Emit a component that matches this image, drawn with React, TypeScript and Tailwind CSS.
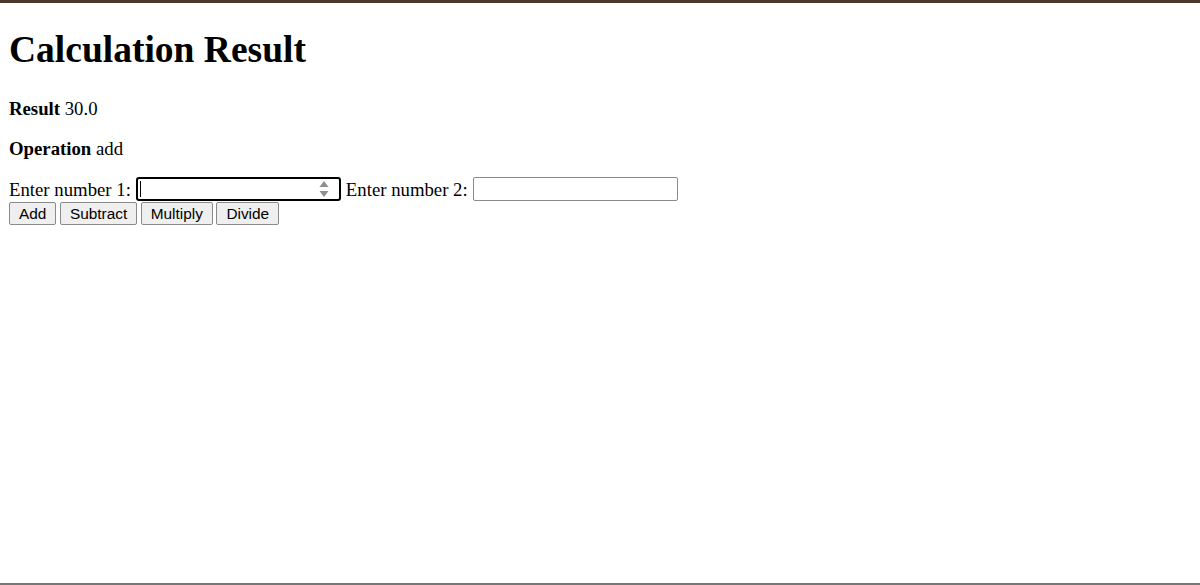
import React from "react";

export default function App() {
  return (
    <div className="min-h-[585px] w-full bg-white flex flex-col" style={{ fontFamily: '"Liberation Serif", "Times New Roman", serif' }}>
      <div className="h-[3px] bg-[#4a3a2b]" />
      <div className="flex-1 pl-[9px] pt-[25px] text-black">
        <h1 className="text-[37.5px] leading-[43px] font-bold m-0">Calculation Result</h1>
        <p className="mt-[27px] text-[18.75px] leading-[21px]">
          <strong>Result</strong> 30.0
        </p>
        <p className="mt-[19px] text-[18.75px] leading-[21px]">
          <strong>Operation</strong> add
        </p>
        <form className="mt-[18px] text-[18.75px] leading-[21px]" onSubmit={(e) => e.preventDefault()}>
          <div className="flex items-center h-[24px]">
            <label htmlFor="n1">Enter number 1:</label>
            <span className="ml-[5px] w-[205px] h-[24px] border-2 border-black rounded-[3px] flex items-center pl-[2px] pr-[10px] bg-white">
              <span className="w-px h-[16px] bg-black" />
              <input id="n1" className="flex-1 min-w-0 outline-none bg-transparent text-[15px]" style={{ fontFamily: '"Liberation Sans", Arial, sans-serif' }} />
              <svg width="10" height="18" viewBox="0 0 10 18">
                <path d="M5 1 L9.5 7 L0.5 7 Z" fill="#8f8f8f" />
                <path d="M5 17 L9.5 11 L0.5 11 Z" fill="#8f8f8f" />
              </svg>
            </span>
            <label htmlFor="n2" className="ml-[5px]">Enter number 2:</label>
            <input id="n2" className="ml-[5px] w-[205px] h-[24px] border border-[#8a8a8a] rounded-[2px] bg-white outline-none" />
          </div>
          <div className="flex gap-[3.5px] mt-[1px]" style={{ fontFamily: '"Liberation Sans", Arial, sans-serif' }}>
            {["Add", "Subtract", "Multiply", "Divide"].map((b) => (
              <button
                key={b}
                type="button"
                className="h-[23px] px-[9px] text-[15.4px] leading-none bg-[#efefef] border border-[#8a8a8a] rounded-[2px] text-black"
              >
                {b}
              </button>
            ))}
          </div>
        </form>
      </div>
      <div className="h-[2px] bg-[#777777]" />
    </div>
  );
}
